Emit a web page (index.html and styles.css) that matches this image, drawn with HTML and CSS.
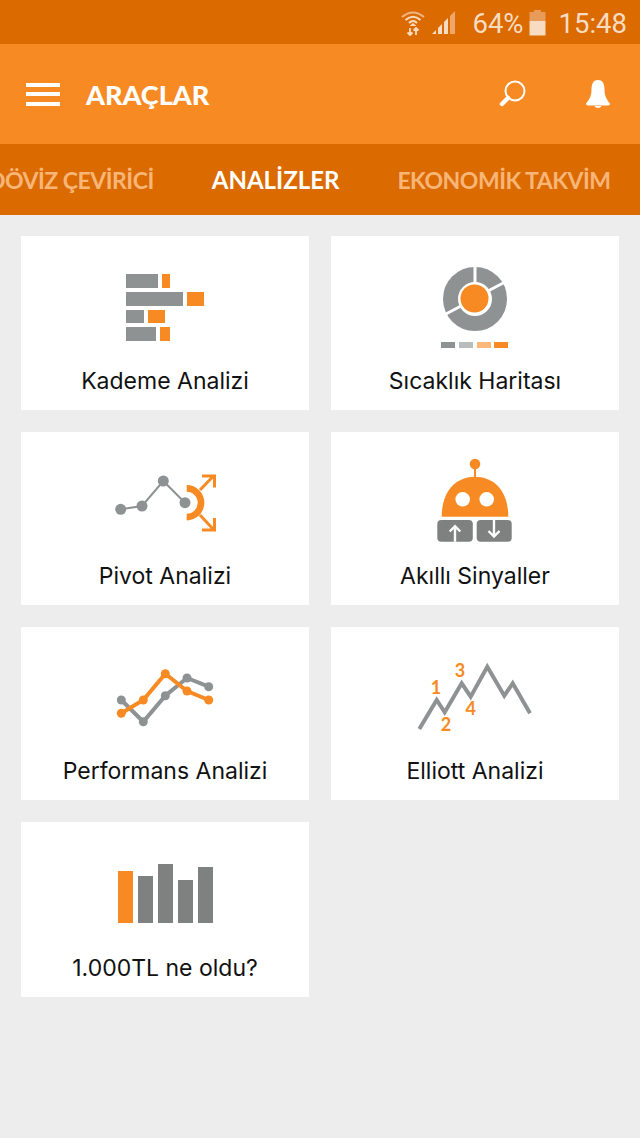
FILE: index.html
```html
<!DOCTYPE html>
<html>

<head>
    <title>Araçlar</title>
    <meta charset="utf-8">
    <link rel="stylesheet" href="styles.css">
</head>

<body>
    <div class="status-bar">
        <svg class="wifi-icon" width="24" height="26" viewBox="0 0 24 26">
            <path d="M1 7 Q12 -2 23 7" fill="none" stroke="#f0b583" stroke-width="2"/>
            <path d="M4.500 10 Q12 3.500 19.500 10" fill="none" stroke="#f8dcc2" stroke-width="2"/>
            <path d="M8 13 Q12 9 16 13" fill="none" stroke="#f8dcc2" stroke-width="2"/>
            <path d="M8.500 16 L12 13 L15.500 16 Z" fill="#f8dcc2"/>
            <path d="M9 18 V25 M6.500 22.500 L9 25 L11.500 22.500 M15 25 V18 M12.500 20.500 L15 18 L17.500 20.500" fill="none" stroke="#f8dcc2" stroke-width="1.800"/>
        </svg>
        <svg class="signal-icon" width="24" height="24" viewBox="0 0 24 24">
            <path d="M0 23 L4 19 V23 Z M6 23 V17 L10 13 V23 Z" fill="#f8dcc2"/>
            <path d="M12 23 V11 L16 7 V23 Z" fill="#f8dcc2"/>
            <path d="M18 23 V5 L23 0 V23 Z" fill="#eea76a"/>
        </svg>
        <span class="status-text">64%</span>
        <svg class="battery-icon" width="17" height="26" viewBox="0 0 17 26">
            <path d="M5 0 H12 V2 H16.500 V11 H0.500 V2 H5 Z" fill="#e89a58"/>
            <rect x="0.500" y="11" width="16" height="14.500" fill="#f8dcc2"/>
        </svg>
        <span class="status-text status-time">15:48</span>
    </div>

    <header class="toolbar">
        <div class="menu-icon"><span></span><span></span><span></span></div>
        <h1 class="toolbar-title">ARAÇLAR</h1>
        <svg class="search-icon" width="28" height="28" viewBox="0 0 28 28">
            <circle cx="16" cy="11" r="9.500" fill="none" stroke="#fff" stroke-width="2"/>
            <path d="M9 18 L3 24" stroke="#fff" stroke-width="4.500" stroke-linecap="round"/>
        </svg>
        <svg class="bell-icon" width="26" height="30" viewBox="0 0 26 30">
            <path d="M13 1 C7.500 1 6.500 6 6.500 11 C6.500 17 4 21 1 24.500 C1 26 2 26.500 4 26.500 H22 C24 26.500 25 26 25 24.500 C22 21 19.500 17 19.500 11 C19.500 6 18.500 1 13 1 Z" fill="#fff"/>
            <path d="M9.500 27 H16.500 C15.500 29.500 10.500 29.500 9.500 27 Z" fill="#fff"/>
        </svg>
    </header>

    <nav class="tabs">
        <div class="tabs-track">
            <span class="tab">DÖVİZ ÇEVİRİCİ</span>
            <span class="tab tab-active">ANALİZLER</span>
            <span class="tab">EKONOMİK TAKVİM</span>
        </div>
    </nav>

    <main class="grid">
        <div class="card">
            <svg class="card-icon" width="120" height="90" viewBox="105 264 120 90">
                <rect x="126" y="274" width="32" height="14" fill="#8e9293"/>
                <rect x="162" y="274" width="8" height="14" fill="#f78a22"/>
                <rect x="126" y="292" width="57" height="14" fill="#8e9293"/>
                <rect x="187" y="292" width="17" height="14" fill="#f78a22"/>
                <rect x="126" y="310" width="18" height="13" fill="#8e9293"/>
                <rect x="148" y="310" width="17" height="13" fill="#f78a22"/>
                <rect x="126" y="327" width="30" height="14" fill="#8e9293"/>
                <rect x="160" y="327" width="10" height="14" fill="#f78a22"/>
            </svg>
            <div class="card-label">Kademe Analizi</div>
        </div>
        <div class="card">
            <svg class="card-icon" width="120" height="90" viewBox="415 264 120 90">
                <circle cx="475" cy="299" r="24.500" fill="none" stroke="#8e9293" stroke-width="15"/>
                <path d="M475 264 V283 M488 291 L507 281 M461 306 L444 315" stroke="#fff" stroke-width="3"/>
                <circle cx="474.500" cy="298.500" r="14" fill="#f78a22"/>
                <rect x="441" y="342" width="14" height="6" fill="#8e9293"/>
                <rect x="459" y="342" width="14" height="6" fill="#b9bdbc"/>
                <rect x="477" y="342" width="14" height="6" fill="#fbb87a"/>
                <rect x="494" y="342" width="14" height="6" fill="#f78a22"/>
            </svg>
            <div class="card-label">Sıcaklık Haritası</div>
        </div>
        <div class="card">
            <svg class="card-icon" width="120" height="90" viewBox="105 460 120 90">
                <path d="M120.700 509.300 L142 506 L163.300 481 L185 502.700" fill="none" stroke="#8e9293" stroke-width="2"/>
                <circle cx="120.700" cy="509.300" r="5.500" fill="#8e9293"/>
                <circle cx="142" cy="506" r="5.500" fill="#8e9293"/>
                <circle cx="163.300" cy="481" r="5.500" fill="#8e9293"/>
                <circle cx="185" cy="502.700" r="5.500" fill="#8e9293"/>
                <path d="M186.700 485 A17.700 17.700 0 0 1 186.700 520.400 V513.700 A11 11 0 0 0 186.700 491.700 Z" fill="#f78a22"/>
                <path d="M200 490 L213 476.500 M202 476 H214.500 V487.500 M200 515 L213 529 M214.500 518 V530 H202" fill="none" stroke="#f78a22" stroke-width="3"/>
            </svg>
            <div class="card-label">Pivot Analizi</div>
        </div>
        <div class="card">
            <svg class="card-icon" width="120" height="90" viewBox="415 460 120 90">
                <circle cx="475" cy="464" r="5.300" fill="#f78a22"/>
                <path d="M475 468 V480" stroke="#f78a22" stroke-width="2"/>
                <path d="M441.700 516.700 C441.700 491 456 476.700 475 476.700 C494 476.700 508.300 491 508.300 516.700 Z" fill="#f78a22"/>
                <circle cx="462.700" cy="499.300" r="7.300" fill="#fff"/>
                <circle cx="486.700" cy="499.300" r="7.300" fill="#fff"/>
                <rect x="437.300" y="520" width="35.500" height="21.700" rx="4" fill="#7f8181"/>
                <rect x="476.700" y="520" width="35" height="21.700" rx="4" fill="#7f8181"/>
                <path d="M455 541.700 V526.500 M449.700 531.500 L455 526.200 L460.300 531.500 M494 520 V536 M488.500 531 L494 536.500 L499.500 531" fill="none" stroke="#fff" stroke-width="2.400"/>
            </svg>
            <div class="card-label">Akıllı Sinyaller</div>
        </div>
        <div class="card">
            <svg class="card-icon" width="120" height="90" viewBox="105 655 120 90">
                <path d="M121.300 700 L143.300 721.700 L165.300 695.700 L187 678 L208.700 686.700" fill="none" stroke="#8e9293" stroke-width="4"/>
                <circle cx="121.300" cy="700" r="4.500" fill="#8e9293"/>
                <circle cx="143.300" cy="721.700" r="4.500" fill="#8e9293"/>
                <circle cx="165.300" cy="695.700" r="4.500" fill="#8e9293"/>
                <circle cx="187" cy="678" r="4.500" fill="#8e9293"/>
                <circle cx="208.700" cy="686.700" r="4.500" fill="#8e9293"/>
                <path d="M121.300 713.300 L143.300 700 L165.300 673.700 L187 691 L208.700 700" fill="none" stroke="#f78a22" stroke-width="4"/>
                <circle cx="121.300" cy="713.300" r="4.500" fill="#f78a22"/>
                <circle cx="143.300" cy="700" r="4.500" fill="#f78a22"/>
                <circle cx="165.300" cy="673.700" r="4.500" fill="#f78a22"/>
                <circle cx="187" cy="691" r="4.500" fill="#f78a22"/>
                <circle cx="208.700" cy="700" r="4.500" fill="#f78a22"/>
            </svg>
            <div class="card-label">Performans Analizi</div>
        </div>
        <div class="card">
            <svg class="card-icon" width="120" height="90" viewBox="415 655 120 90">
                <path d="M419.300 729 L436.700 700 L444.700 712.300 L461.700 683.300 L470.700 696.700 L487.300 666.700 L504.300 695.700 L512.700 683.300 L530 713.300" fill="none" stroke="#8e9293" stroke-width="4"/>
                <text class="elliott-num" x="436" y="693.500">1</text>
                <text class="elliott-num" x="446" y="730.500">2</text>
                <text class="elliott-num" x="460" y="677">3</text>
                <text class="elliott-num" x="470.700" y="714.500">4</text>
            </svg>
            <div class="card-label">Elliott Analizi</div>
        </div>
        <div class="card">
            <svg class="card-icon" width="120" height="90" viewBox="105 850 120 90">
                <rect x="118" y="871" width="15" height="52" fill="#f78a22"/>
                <rect x="138" y="876" width="15" height="47" fill="#7f8181"/>
                <rect x="158" y="864" width="15" height="59" fill="#7f8181"/>
                <rect x="178" y="880" width="15" height="43" fill="#7f8181"/>
                <rect x="198" y="867" width="15" height="56" fill="#7f8181"/>
            </svg>
            <div class="card-label">1.000TL ne oldu?</div>
        </div>
    </main>
</body>

</html>
```

FILE: styles.css
```css
* {
    box-sizing: border-box;
}

body {
    margin: 0;
    height: 1138px;
    overflow: hidden;
    background-color: #ededed;
    font-family: Lato, "Open Sans", sans-serif;
}

.status-bar {
    height: 44px;
    background-color: #db6a00;
    display: flex;
    align-items: center;
    justify-content: flex-end;
    padding: 2px 13px 0 0;
}

.wifi-icon {
    margin-right: 7px;
}

.signal-icon {
    margin-right: 16px;
}

.status-text {
    font-family: Roboto, sans-serif;
    font-size: 27.500px;
    color: #f8dcc2;
}

.battery-icon {
    margin-left: 5px;
}

.status-time {
    margin-left: 13px;
}

.toolbar {
    height: 100px;
    background-color: #f78a22;
    display: flex;
    align-items: center;
    padding: 0 29px 0 26px;
}

.menu-icon {
    width: 34px;
    height: 23px;
    display: flex;
    flex-direction: column;
    justify-content: space-between;
}

.menu-icon span {
    height: 4px;
    background-color: #fff;
}

.toolbar-title {
    margin: 0 0 0 26px;
    flex: 1;
    font-size: 27px;
    font-weight: 900;
    color: #fff;
}

.search-icon {
    margin-right: 58px;
}

.tabs {
    height: 71px;
    background-color: #db6a00;
    overflow: hidden;
}

.tabs-track {
    display: flex;
    align-items: center;
    gap: 58px;
    height: 100%;
    margin-left: -12px;
    white-space: nowrap;
}

.tab {
    font-size: 23px;
    font-weight: 700;
    letter-spacing: -0.500px;
    color: #f8b578;
}

.tab-active {
    font-size: 24px;
    letter-spacing: 0;
    color: #fff;
}

.grid {
    display: grid;
    grid-template-columns: 288px 288px;
    grid-template-rows: 174px 173px 173px 175px;
    gap: 22px;
    padding: 21px 21px 0;
}

.card {
    background-color: #fff;
    display: flex;
    flex-direction: column;
    align-items: center;
    padding: 28px 0 16px;
}

.card-icon {
    display: block;
    overflow: visible;
}

.card-label {
    margin-top: auto;
    font-family: Inter, Lato, sans-serif;
    font-size: 23px;
    line-height: 26px;
    color: #111;
}

.elliott-num {
    font-family: Lato, sans-serif;
    font-size: 18px;
    font-weight: 700;
    fill: #f78a22;
    text-anchor: middle;
}
```
